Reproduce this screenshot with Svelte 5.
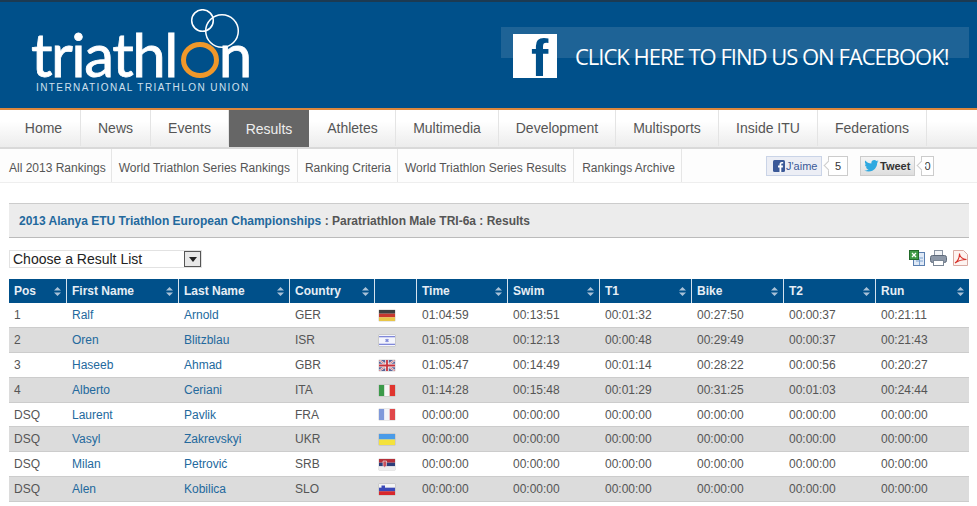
<script>
  const nav = [["Home",false,62],["News",false,70],["Events",false,78],["Results",true,80],["Athletes",false,87],["Multimedia",false,103],["Development",false,117],["Multisports",false,103],["Inside ITU",false,99],["Federations",false,109]];
  const sub = ["All 2013 Rankings","World Triathlon Series Rankings","Ranking Criteria","World Triathlon Series Results","Rankings Archive"];
  const cols = ["Pos","First Name","Last Name","Country","","Time","Swim","T1","Bike","T2","Run"];
  const rows = [
    ["1","Ralf","Arnold","GER","de","01:04:59","00:13:51","00:01:32","00:27:50","00:00:37","00:21:11"],
    ["2","Oren","Blitzblau","ISR","il","01:05:08","00:12:13","00:00:48","00:29:49","00:00:37","00:21:43"],
    ["3","Haseeb","Ahmad","GBR","gb","01:05:47","00:14:49","00:01:14","00:28:22","00:00:56","00:20:27"],
    ["4","Alberto","Ceriani","ITA","it","01:14:28","00:15:48","00:01:29","00:31:25","00:01:03","00:24:44"],
    ["DSQ","Laurent","Pavlik","FRA","fr","00:00:00","00:00:00","00:00:00","00:00:00","00:00:00","00:00:00"],
    ["DSQ","Vasyl","Zakrevskyi","UKR","ua","00:00:00","00:00:00","00:00:00","00:00:00","00:00:00","00:00:00"],
    ["DSQ","Milan","Petrović","SRB","rs","00:00:00","00:00:00","00:00:00","00:00:00","00:00:00","00:00:00"],
    ["DSQ","Alen","Kobilica","SLO","si","00:00:00","00:00:00","00:00:00","00:00:00","00:00:00","00:00:00"]
  ];
  const widths = [58,112,111,85,42,91,92,92,92,92,93];
</script>

<div class="page">
  <header class="top">
    <div class="logo">
      <div class="word">triathl<span class="ring"></span><span class="n">n</span></div>
      <svg class="circles" width="56" height="46" viewBox="0 0 56 46" fill="none" stroke="#fff" stroke-width="1.500" aria-hidden="true">
        <circle cx="13.500" cy="11.500" r="10.800"/><circle cx="33" cy="22" r="16.300"/>
      </svg>
      <div class="union">INTERNATIONAL TRIATHLON UNION</div>
    </div>
    <div class="fb">
      <div class="fbstripe"></div>
      <div class="fbicon"><span>f</span></div>
      <div class="fbtext">CLICK HERE TO FIND US ON FACEBOOK!</div>
    </div>
  </header>

  <nav class="nav">
    {#each nav as [label, active, w]}
      <a class="navitem" class:active style="width:{w}px">{label}</a>
    {/each}
  </nav>

  <div class="sub">
    <div class="sublinks">
      {#each sub as s}<a class="subitem">{s}</a>{/each}
    </div>
    <div class="social">
      <span class="like"><svg width="12" height="12" viewBox="0 0 12 12"><rect width="12" height="12" rx="1.500" fill="#3b5998"/><path d="M8.300 12V7.400h1.500l.2-1.800H8.300V4.500c0-.5.2-.9.9-.9h1V2c-.2 0-.8-.1-1.400-.1-1.400 0-2.300.9-2.300 2.400v1.300H5v1.800h1.500V12z" fill="#fff"/></svg>J'aime</span>
      <span class="count c1">5</span>
      <span class="tweet"><svg width="15" height="12" viewBox="0 0 24 20"><path d="M24 2.400c-.9.4-1.800.7-2.800.8 1-.6 1.800-1.600 2.200-2.700-1 .6-2 1-3.100 1.200C19.300.7 18 0 16.600 0c-2.700 0-4.900 2.200-4.900 4.900 0 .4 0 .8.100 1.100C7.700 5.800 4.100 3.900 1.700.9c-.4.700-.7 1.600-.7 2.500 0 1.700.9 3.200 2.200 4.100-.8 0-1.600-.2-2.200-.6v.1c0 2.400 1.700 4.400 3.900 4.800-.4.100-.8.200-1.300.2-.3 0-.6 0-.9-.1.600 2 2.400 3.400 4.600 3.400-1.700 1.300-3.800 2.100-6.100 2.100-.4 0-.8 0-1.200-.1C2.200 18.300 4.800 19.100 7.500 19.100c9.100 0 14-7.500 14-14v-.6c1-.7 1.800-1.500 2.500-2.100z" fill="#2fa9e0"/></svg>Tweet</span>
      <span class="count c2">0</span>
    </div>
  </div>

  <main class="content">
    <div class="crumb"><a>2013 Alanya ETU Triathlon European Championships</a> : Paratriathlon Male TRI-6a : Results</div>

    <div class="tools">
      <div class="select"><span>Choose a Result List</span><span class="arrow"><svg width="8" height="5" viewBox="0 0 8 5"><path d="M0 0h8L4 5z" fill="#222"/></svg></span></div>
      <div class="icons">
        <svg width="16" height="16" viewBox="0 0 16 16"><rect x="4.500" y="2.500" width="11" height="13" fill="#dfe9f6" stroke="#5a7fb0"/><path d="M7 8h7M7 11h7M10.500 9v6" stroke="#7fa3cf"/><rect x="0.500" y="0.500" width="9" height="9" fill="#3f9a45" stroke="#226a2a"/><path d="M3 3l4 4M7 3l-4 4" stroke="#fff" stroke-width="1.300"/></svg>
        <svg width="17" height="16" viewBox="0 0 17 16"><rect x="4.500" y="0.500" width="8" height="6" fill="#f2f4f7" stroke="#8b95a3"/><rect x="0.500" y="5.500" width="16" height="7" rx="2" fill="#8d98a8" stroke="#5e6a7a"/><rect x="3.500" y="10.500" width="10" height="5" fill="#fff" stroke="#7b8795"/></svg>
        <svg width="15" height="16" viewBox="0 0 15 16"><path d="M.5.500h10l4 4v11H.500z" fill="#fdf3f0" stroke="#d9aaa2"/><path d="M2 13c3-2 4.500-6 4.500-9.500 0 3 3 6 7 6-4 0-8 1-11.500 3.500z" fill="none" stroke="#d8322a" stroke-width="1.100"/></svg>
      </div>
    </div>

    <div class="table">
      <div class="row head">
        {#each cols as c, i}
          <div class="cell" style="width:{widths[i]}px">
            <span>{c}</span>
            {#if c}<svg class="sort" width="7" height="9" viewBox="0 0 7 9"><path d="M3.500 0L7 3.600H0zM3.500 9L0 5.400h7z" fill="#a9c2d8"/></svg>{/if}
          </div>
        {/each}
      </div>
      {#each rows as r, ri}
        <div class="row body" class:alt={ri % 2 === 1}>
          {#each r as v, i}
            <div class="cell" style="width:{widths[i]}px">
              {#if i === 1 || i === 2}
                <a>{v}</a>
              {:else if i === 4}
                <svg class="flag" width="16" height="11" viewBox="0 0 16 11" aria-hidden="true">
                  {#if v === "de"}
                    <rect width="16" height="3.700" fill="#3f3f3f"/><rect y="3.700" width="16" height="3.700" fill="#c8382e"/><rect y="7.300" width="16" height="3.700" fill="#e8c547"/>
                  {:else if v === "il"}
                    <rect width="16" height="11" fill="#f4f5fd"/><rect y="1" width="16" height="1.300" fill="#8088d8"/><rect y="8.700" width="16" height="1.300" fill="#8088d8"/><path d="M8 3.400l2 3.300H6zM8 7.600l-2-3.300h4z" fill="#7f88d8"/>
                  {:else if v === "gb"}
                    <rect width="16" height="11" fill="#5a6498"/><path d="M0 0l16 11M16 0L0 11" stroke="#eee" stroke-width="2"/><path d="M0 0l16 11M16 0L0 11" stroke="#c8505c" stroke-width=".7"/><path d="M8 0v11M0 5.500h16" stroke="#f4f4f4" stroke-width="3.500"/><path d="M8 0v11M0 5.500h16" stroke="#c8323c" stroke-width="1.800"/>
                  {:else if v === "it"}
                    <rect width="5.400" height="11" fill="#3c9a4a"/><rect x="5.400" width="5.300" height="11" fill="#f6f6f6"/><rect x="10.700" width="5.300" height="11" fill="#e0352f"/>
                  {:else if v === "fr"}
                    <rect width="5.400" height="11" fill="#7f98da"/><rect x="5.400" width="5.300" height="11" fill="#f4f4f8"/><rect x="10.700" width="5.300" height="11" fill="#e0474a"/>
                  {:else if v === "ua"}
                    <rect width="16" height="5.500" fill="#4a9be8"/><rect y="5.500" width="16" height="5.500" fill="#f4e23c"/>
                  {:else if v === "rs"}
                    <rect width="16" height="3.700" fill="#b5303a"/><rect y="3.700" width="16" height="3.700" fill="#2c3e7a"/><rect y="7.300" width="16" height="3.700" fill="#eee"/><path d="M4 2h3.500v4.500L5.750 8.500 4 6.500z" fill="#c8505c" stroke="#eee" stroke-width=".6"/>
                  {:else}
                    <rect width="16" height="3.700" fill="#f4f4f4"/><rect y="3.700" width="16" height="3.700" fill="#3a49b8"/><rect y="7.300" width="16" height="3.700" fill="#d8282c"/><path d="M2.500 1.500h3.500v3L4.250 6 2.500 4.500z" fill="#3a49b8"/>
                  {/if}
                </svg>
              {:else}
                <span>{v}</span>
              {/if}
            </div>
          {/each}
        </div>
      {/each}
    </div>
  </main>
</div>

<style>
  :global(body) { margin: 0; background: #fff; }
  .page { width: 977px; height: 506px; overflow: hidden; font-family: "Liberation Sans", Arial, sans-serif; color: #555; font-size: 12px; }
  a { color: inherit; text-decoration: none; }

  .top { height: 106px; background: #00508a; border-top: 2px solid #1c3a52; border-bottom: 2px solid #dc883e; display: flex; justify-content: space-between; align-items: flex-start; }
  .logo { position: relative; width: 260px; height: 100px; margin-left: 31px; color: #fff; }
  .word { position: absolute; left: 0; top: 24px; font-family: Lato, "Open Sans", sans-serif; font-weight: 400; font-size: 60px; line-height: 56px; letter-spacing: -1.500px; -webkit-text-stroke: 0.800px #fff; display: flex; align-items: baseline; white-space: nowrap; }
  .ring { display: inline-block; width: 38px; height: 36px; margin: 0 0 0 4px; box-sizing: border-box; border: 5px solid #f0982a; border-radius: 50%; transform: translateY(1px); }
  .n { margin-left: 0; }
  .circles { position: absolute; left: 158px; top: 7px; }
  .union { position: absolute; left: 5px; top: 81px; font-size: 10px; line-height: 10px; letter-spacing: 1.420px; white-space: nowrap; color: #cfe0ee; }

  .fb { position: relative; width: 476px; height: 106px; }
  .fbstripe { position: absolute; left: 0; top: 25px; right: 8px; height: 31px; background: #1e6396; }
  .fbicon { position: absolute; left: 12px; top: 32px; width: 44px; height: 44px; background: #fff; }
  .fbicon span { position: absolute; left: 18px; top: -2px; font: bold 52px/52px "Liberation Sans", sans-serif; color: #00508a; }
  .fbtext { position: absolute; left: 74px; top: 40px; font-family: "Open Sans", sans-serif; font-size: 22px; line-height: 28px; letter-spacing: -1px; color: #fff; white-space: nowrap; }

  .nav { height: 37px; display: flex; background: linear-gradient(#fff 30%, #ececec); border-bottom: 2px solid #d9d9d9; }
  .navitem { box-sizing: border-box; height: 36px; border-right: 1px solid #e4e4e4; display: flex; align-items: center; justify-content: center; font-size: 14px; color: #555; }
  .navitem:first-child { width: 81px !important; padding-left: 7px; }
  .navitem:nth-child(5) { padding-left: 1px; }
  .navitem.active { background: #666; color: #eee; border-right: 0; height: 37px; }

  .sub { height: 33px; display: flex; justify-content: space-between; border-bottom: 1px solid #eee; background: #fdfdfd; }
  .sublinks { display: flex; }
  .subitem { display: flex; align-items: center; padding: 5px 6px 0 7px; border-right: 1px solid #e6e6e6; color: #555; white-space: nowrap; }
  .subitem:first-child { padding-left: 9px; padding-right: 5px; }
  .subitem:nth-child(2) { padding-right: 7px; }
  .subitem:nth-child(4) { padding-right: 7px; }
  .subitem:nth-child(5) { padding-left: 8px; }
  .social { display: flex; align-items: flex-start; padding: 7px 43px 0 0; font-size: 11px; }
  .like { height: 20px; width: 56px; box-sizing: border-box; display: flex; align-items: center; gap: 1px; padding-left: 6px; background: #eceef5; border: 1px solid #cad4e7; color: #3b5998; font-size: 11px; }
  .count { height: 20px; box-sizing: border-box; border: 1px solid #ccc; background: #fff; color: #333; display: flex; align-items: center; justify-content: center; margin-left: 6px; position: relative; }
  .count::before { content: ""; position: absolute; left: -4px; top: 5px; width: 6px; height: 6px; background: #fff; border-left: 1px solid #ccc; border-bottom: 1px solid #ccc; transform: rotate(45deg); }
  .c1 { width: 20px; margin-right: 12px; }
  .c2 { width: 13px; }
  .tweet { height: 20px; width: 55px; box-sizing: border-box; display: flex; align-items: center; gap: 1px; padding-left: 3px; background: linear-gradient(#f5f5f5, #dedede); border: 1px solid #ccc; font-weight: bold; color: #333; }

  .content { padding: 20px 8px 0 9px; }
  .crumb { height: 35px; box-sizing: border-box; background: #ececec; border-top: 1px solid #ccc; border-bottom: 1px solid #bbb; padding-left: 10px; display: flex; align-items: center; font-weight: bold; color: #555; white-space: pre; }
  .crumb a { color: #23699d; }

  .tools { height: 41px; display: flex; justify-content: space-between; align-items: flex-start; }
  .select { margin-top: 12px; width: 193px; height: 18px; box-sizing: border-box; border: 1px solid #e2e2e2; display: flex; justify-content: space-between; align-items: center; padding: 0 0 0 3px; font-size: 14px; color: #222; }
  .arrow { width: 17px; height: 16px; box-sizing: border-box; border: 1px solid #555; background: #e8e8e8; display: flex; align-items: center; justify-content: center; }
  .icons { display: flex; gap: 5px; margin-top: 12px; margin-right: 1px; }
  .icons svg:last-child { margin-left: 1px; }

  .table { width: 960px; }
  .row { display: flex; }
  .cell { box-sizing: border-box; display: flex; align-items: center; justify-content: space-between; padding: 0 5px; white-space: nowrap; }
  .head { height: 24px; background: #00508a; color: #e6eef5; font-weight: bold; }
  .head .cell { border-right: 1px solid #d5e3ee; }
  .head .cell:last-child { border-right: 0; }
  .body { height: 25px; box-sizing: border-box; border-bottom: 1px solid #ccc; }
  .body:nth-child(6) { height: 24px; }
  .body.alt { background: #dcdcdc; }
  .body a { color: #23699d; }
  .flag { display: block; transform: translateX(-1px); box-shadow: 0 0 1px #777; }
</style>
